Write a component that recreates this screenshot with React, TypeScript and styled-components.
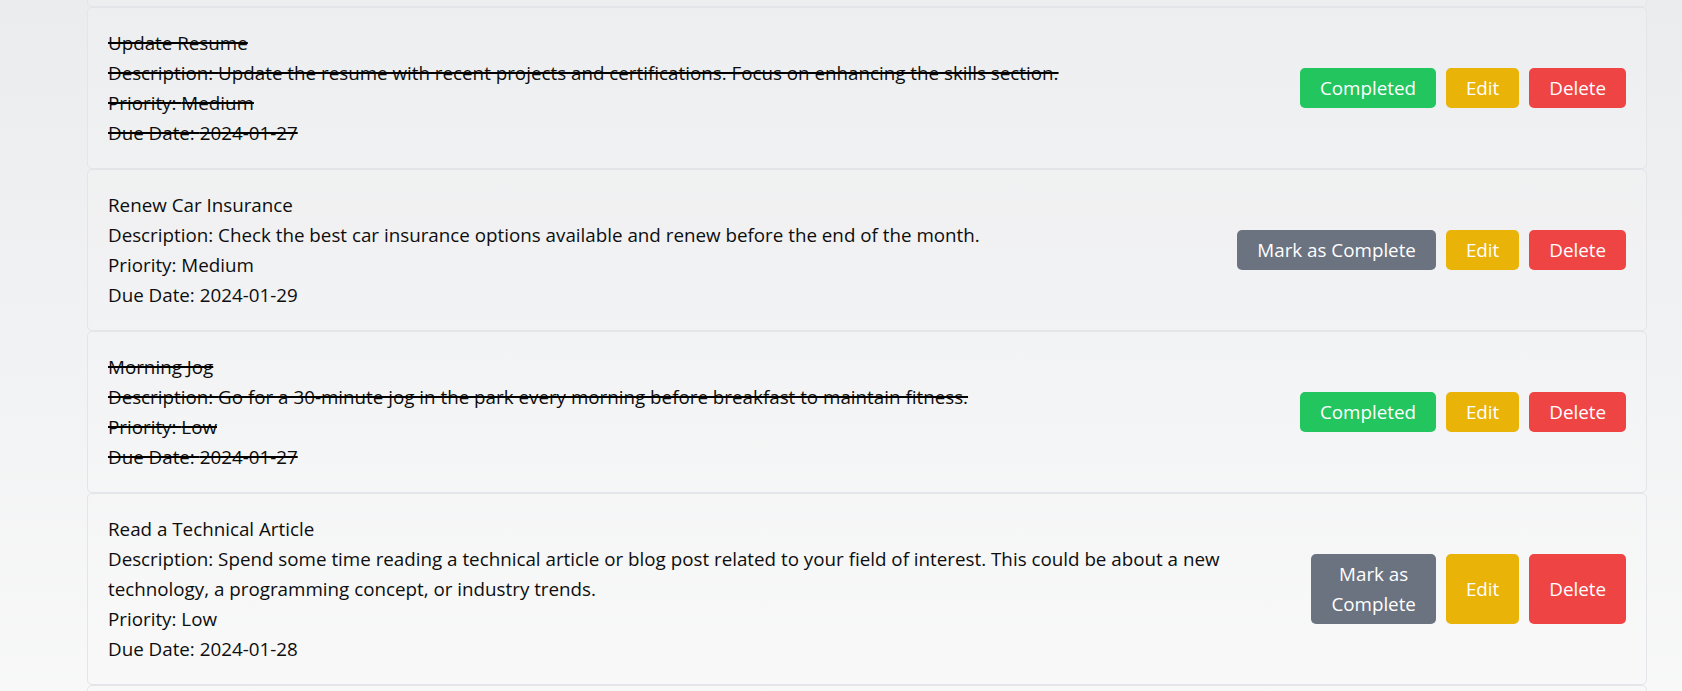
import React from "react";
import styled, { createGlobalStyle } from "styled-components";

const GlobalStyle = createGlobalStyle`
  html, body {
    margin: 0;
    padding: 0;
  }
  body {
    font-family: "Open Sans", "Noto Sans", sans-serif;
    color: #0d0d0d;
    background: linear-gradient(180deg, #ebecee 0%, #fbfbfb 100%);
    min-height: 691px;
    overflow: hidden;
  }
`;

type Task = {
  title: string;
  description: string;
  priority: string;
  due: string;
  done: boolean;
};

const tasks: Task[] = [
  {
    title: "Prepare Weekly Report",
    description: "Compile the weekly progress report and share it with the team before Friday.",
    priority: "High",
    due: "2024-01-26",
    done: false,
  },
  {
    title: "Update Resume",
    description:
      "Update the resume with recent projects and certifications. Focus on enhancing the skills section.",
    priority: "Medium",
    due: "2024-01-27",
    done: true,
  },
  {
    title: "Renew Car Insurance",
    description:
      "Check the best car insurance options available and renew before the end of the month.",
    priority: "Medium",
    due: "2024-01-29",
    done: false,
  },
  {
    title: "Morning Jog",
    description:
      "Go for a 30-minute jog in the park every morning before breakfast to maintain fitness.",
    priority: "Low",
    due: "2024-01-27",
    done: true,
  },
  {
    title: "Read a Technical Article",
    description:
      "Spend some time reading a technical article or blog post related to your field of interest. This could be about a new technology, a programming concept, or industry trends.",
    priority: "Low",
    due: "2024-01-28",
    done: false,
  },
  {
    title: "Grocery Shopping",
    description: "Buy vegetables, fruits and other essentials for the week.",
    priority: "Medium",
    due: "2024-01-30",
    done: false,
  },
];

const Page = styled.main`
  padding: 0 35px 0 87px;
`;

const List = styled.ul`
  list-style: none;
  margin: -155px 0 0;
  padding: 0;
  display: flex;
  flex-direction: column;
`;

const Card = styled.li`
  display: flex;
  align-items: center;
  justify-content: space-between;
  gap: 16px;
  padding: 20px;
  border: 1px solid #e3e5e8;
  border-radius: 5px;
  background: rgba(255, 255, 255, 0.12);
`;

const Details = styled.div<{ $done: boolean }>`
  font-size: 18.8px;
  line-height: 30px;
  text-decoration: ${(p) => (p.$done ? "line-through" : "none")};
  text-decoration-thickness: 2px;
  text-decoration-color: #000;
`;

const Line = styled.p`
  margin: 0;
`;

const Actions = styled.div`
  display: flex;
  align-items: stretch;
  gap: 10px;
`;

const tones = {
  success: "#22c55e",
  pending: "#6b7280",
  edit: "#eab308",
  danger: "#ef4444",
};

const Button = styled.button<{ $tone: keyof typeof tones }>`
  font-family: inherit;
  font-size: 18.8px;
  line-height: 30px;
  padding: 5px 20px;
  border: none;
  border-radius: 5px;
  color: #fff;
  background: ${(p) => tones[p.$tone]};
  cursor: pointer;
`;

export default function App() {
  return (
    <>
      <GlobalStyle />
      <Page>
        <List>
          {tasks.map((t) => (
            <Card key={t.title}>
              <Details $done={t.done}>
                <Line>{t.title}</Line>
                <Line>Description: {t.description}</Line>
                <Line>Priority: {t.priority}</Line>
                <Line>Due Date: {t.due}</Line>
              </Details>
              <Actions>
                <Button $tone={t.done ? "success" : "pending"}>
                  {t.done ? "Completed" : "Mark as Complete"}
                </Button>
                <Button $tone="edit">Edit</Button>
                <Button $tone="danger">Delete</Button>
              </Actions>
            </Card>
          ))}
        </List>
      </Page>
    </>
  );
}
